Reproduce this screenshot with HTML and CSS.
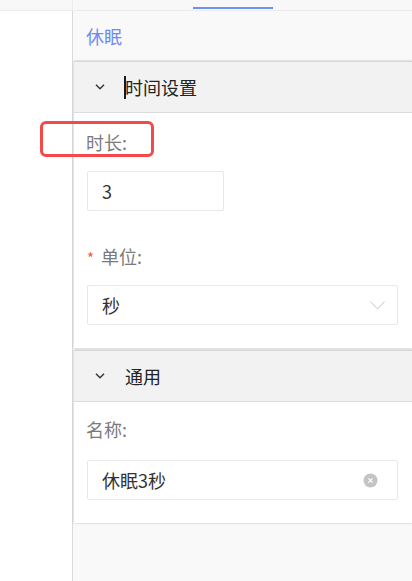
FILE: index.html
```html
<!DOCTYPE html>
<html lang="zh-CN">
<head>
    <meta charset="UTF-8">
    <meta name="viewport" content="width=device-width, initial-scale=1.0">
    <title>休眠</title>
    <link rel="stylesheet" href="styles.css">
</head>
<body>

    <!-- Tab strip -->
    <div class="tabbar">
        <div class="tabbar-left"></div>
        <div class="tabbar-right"><span class="tab-active"></span></div>
    </div>

    <div class="layout">
        <!-- Left column -->
        <aside class="sidebar"></aside>

        <!-- Property panel -->
        <main class="panel">
            <h1 class="panel-title">休眠</h1>

            <section class="card">
                <div class="card-header">
                    <svg class="arrow" width="10" height="6" viewBox="0 0 10 6"><path d="M1 0.8 L5 4.8 L9 0.8" fill="none" stroke="#333" stroke-width="1.4"/></svg>
                    <span class="caret"></span><span class="card-title">时间设置</span>
                </div>
                <div class="card-body body-time">
                    <div class="field">
                        <label class="field-label">时长:</label>
                        <div class="input input-short">3</div>
                    </div>
                    <div class="field field-gap">
                        <label class="field-label"><span class="required">*</span>单位:</label>
                        <div class="input select">
                            <span>秒</span>
                            <svg width="15" height="9" viewBox="0 0 15 9"><path d="M0.5 0.5 L7.5 8 L14.5 0.5" fill="none" stroke="#c6c6c6" stroke-width="1"/></svg>
                        </div>
                    </div>
                </div>
            </section>

            <section class="card card-second">
                <div class="card-header">
                    <svg class="arrow" width="10" height="6" viewBox="0 0 10 6"><path d="M1 0.8 L5 4.8 L9 0.8" fill="none" stroke="#333" stroke-width="1.4"/></svg>
                    <span class="card-title">通用</span>
                </div>
                <div class="card-body body-common">
                    <div class="field">
                        <label class="field-label">名称:</label>
                        <div class="input select clearable">
                            <span>休眠3秒</span>
                            <svg width="15" height="15" viewBox="0 0 15 15"><circle cx="7.5" cy="7.5" r="7" fill="#c4c4c4"/><path d="M5.4 5.4 L9.6 9.6 M9.6 5.4 L5.4 9.6" stroke="#fff" stroke-width="1.2"/></svg>
                        </div>
                    </div>
                </div>
            </section>
        </main>
    </div>

    <!-- Annotation box -->
    <div class="highlight"></div>

</body>
</html>
```

FILE: styles.css
```css
* {
    margin: 0;
    padding: 0;
    box-sizing: border-box;
}

body {
    font-family: "Noto Sans CJK SC", "Noto Sans", sans-serif;
    background-color: #f9f9f9;
    color: #333;
    height: 581px;
    overflow: hidden;
    position: relative;
}

.tabbar {
    display: flex;
    height: 11px;
    background-color: #f8f8f8;
    border-bottom: 1px solid #ececec;
}

.tabbar-left {
    width: 73px;
    border-right: 1px solid #ececec;
}

.tabbar-right {
    flex: 1;
    padding-left: 120px;
    padding-top: 7px;
}

.tab-active {
    display: block;
    width: 80px;
    height: 2px;
    background-color: #6f92f2;
}

.layout {
    display: flex;
    height: 570px;
}

.sidebar {
    width: 73px;
    background-color: #fff;
    border-right: 1px solid #d9d9d9;
}

.panel {
    flex: 1;
    background-color: #f9f9f9;
}

.panel-title {
    height: 50px;
    line-height: 50px;
    padding-left: 13px;
    font-size: 18px;
    font-weight: normal;
    color: #7089f2;
}

.card {
    margin-left: 1px;
    background-color: #fff;
    box-shadow: 0 0 2px rgba(0, 0, 0, 0.25);
}

.card-second {
    margin-top: 2px;
}

.card-header {
    display: flex;
    align-items: center;
    height: 52px;
    padding-left: 21px;
    background-color: #f2f2f2;
    border-top: 1px solid #d6d6d6;
    border-bottom: 1px solid #dcdcdc;
    font-size: 18px;
    color: #222;
}

.arrow {
    margin-right: 20px;
}

.caret {
    display: inline-block;
    width: 2px;
    height: 23px;
    background-color: #151a2c;
    margin-left: -1px;
    margin-right: -1px;
}

.card-body {
    padding: 0 14px 23px 12px;
}

.body-time {
    padding-top: 16px;
}

.body-common {
    padding-top: 14px;
}

.field-label {
    display: block;
    height: 26px;
    line-height: 26px;
    font-size: 18px;
    color: #7a7a7a;
    margin-bottom: 16px;
}

.body-common .field-label {
    margin-bottom: 18px;
}

.field-gap {
    margin-top: 32px;
}

.required {
    color: #f25a4a;
    font-size: 15px;
    margin-left: 1px;
    margin-right: 7px;
}

.input {
    height: 40px;
    line-height: 38px;
    margin-left: 1px;
    padding-left: 14px;
    border: 1px solid #e8e8e8;
    border-radius: 2px;
    font-size: 18px;
    color: #333;
    background-color: #fff;
}

.input-short {
    width: 137px;
}

.select {
    display: flex;
    align-items: center;
    justify-content: space-between;
    padding-right: 12px;
}

.clearable {
    padding-right: 19px;
}

.highlight {
    position: absolute;
    left: 40px;
    top: 121px;
    width: 114px;
    height: 36px;
    border: 3px solid #f24a4a;
    border-radius: 6px;
}
```
